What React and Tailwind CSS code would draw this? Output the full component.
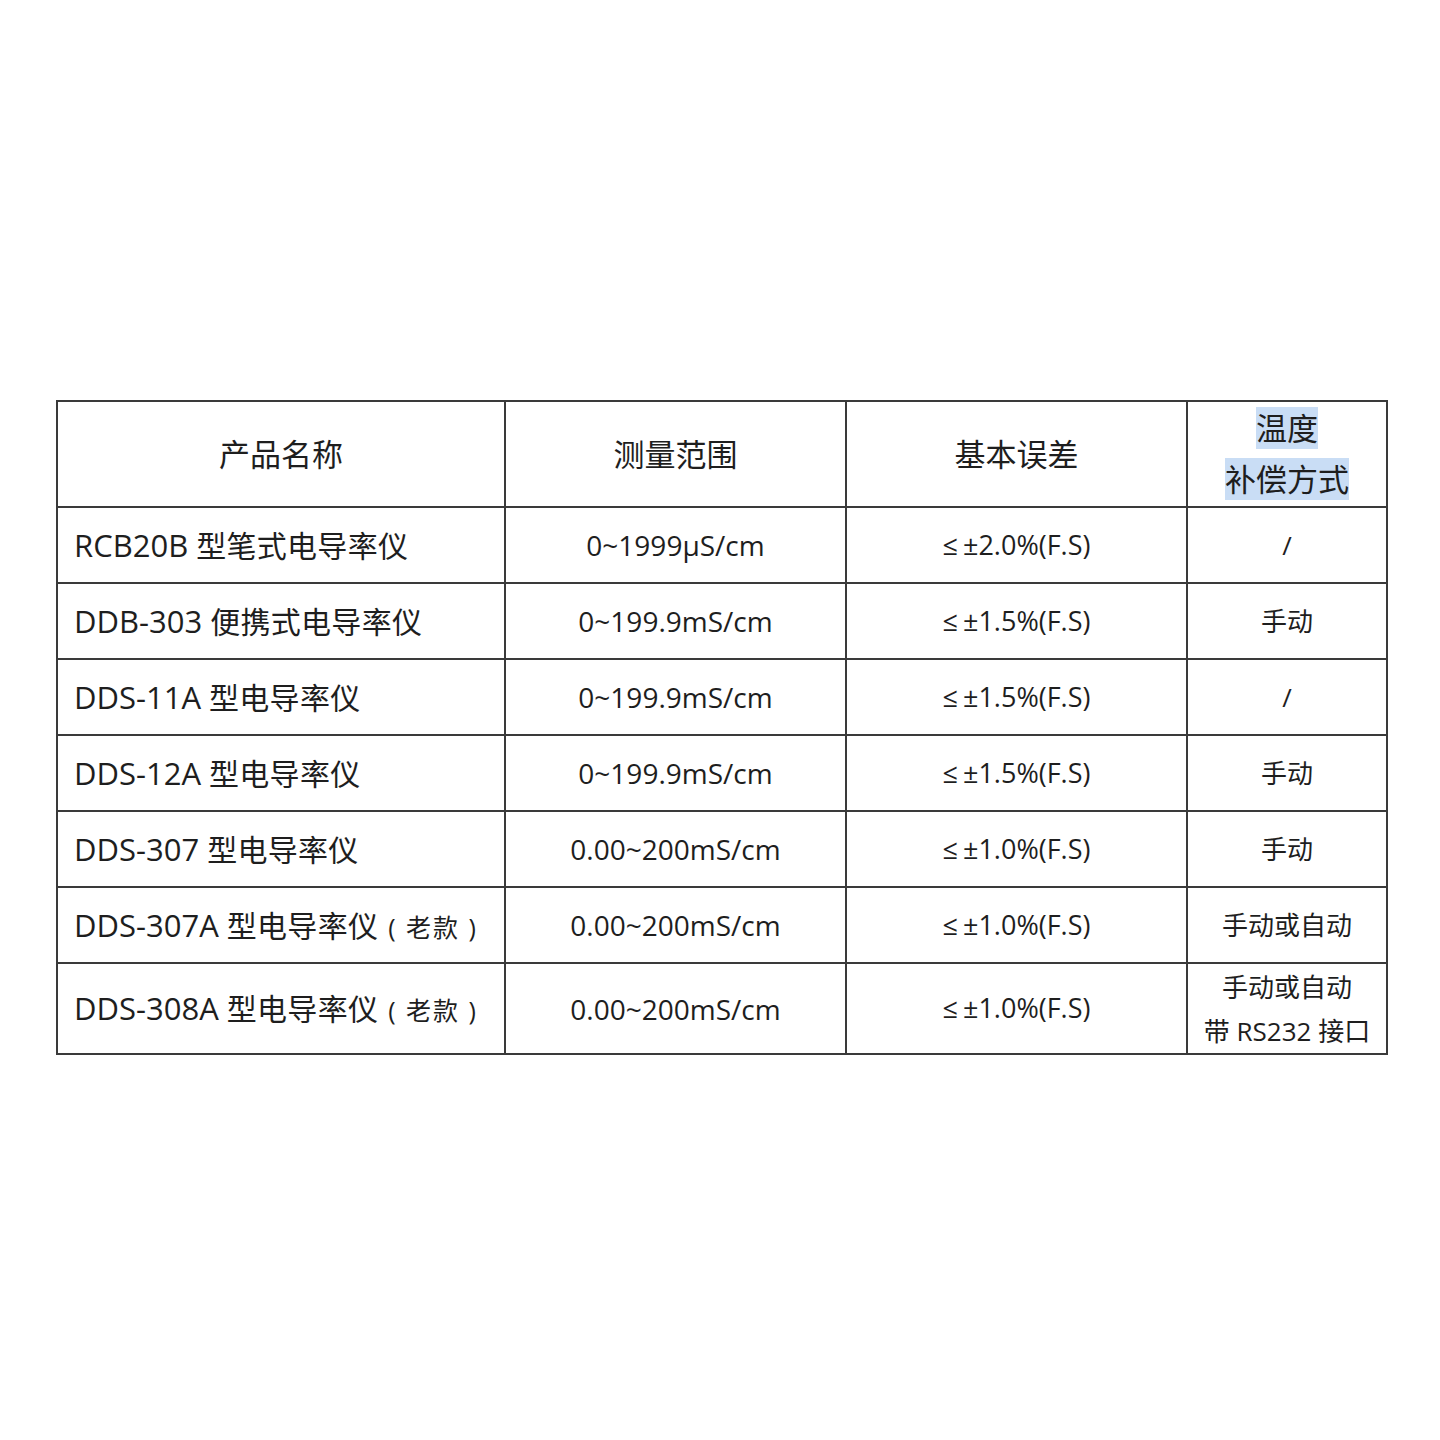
import React from "react";

const rows = [
  { name: "RCB20B", model: "型笔式电导率仪", range: "0~1999μS/cm", err: "≤±2.0%(F.S)", comp: "/" },
  { name: "DDB-303", model: "便携式电导率仪", range: "0~199.9mS/cm", err: "≤±1.5%(F.S)", comp: "手动" },
  { name: "DDS-11A", model: "型电导率仪", range: "0~199.9mS/cm", err: "≤±1.5%(F.S)", comp: "/" },
  { name: "DDS-12A", model: "型电导率仪", range: "0~199.9mS/cm", err: "≤±1.5%(F.S)", comp: "手动" },
  { name: "DDS-307", model: "型电导率仪", range: "0.00~200mS/cm", err: "≤±1.0%(F.S)", comp: "手动" },
  { name: "DDS-307A", model: "型电导率仪", old: true, range: "0.00~200mS/cm", err: "≤±1.0%(F.S)", comp: "手动或自动" },
];

const cell = "border-2 border-[#3a3a3a] text-center align-middle";

function Err({ text }) {
  // "≤" and "±" separated by a small gap as in the reference
  return (
    <span>
      ≤<span className="ml-[5px]">{text.slice(1)}</span>
    </span>
  );
}

function Name({ r }) {
  return (
    <>
      <span className="text-[31px]">{r.name}</span>
      <span className="text-[30px] ml-[8px] tracking-[0.3px]">{r.model}</span>
      {r.old && <span className="text-[25px] ml-[10px] tracking-[2px]">( 老款 )</span>}
    </>
  );
}

export default function App() {
  return (
    <div
      className="w-[1440px] h-[1440px] bg-white pt-[400px] pl-[56px] text-[#1e1e1e] text-[28px]"
      style={{ fontFamily: '"Open Sans", "Noto Sans CJK SC", sans-serif' }}
    >
      <table className="border-collapse table-fixed w-[1330px]">
        <colgroup>
          <col className="w-[448px]" />
          <col className="w-[341px]" />
          <col className="w-[341px]" />
          <col className="w-[200px]" />
        </colgroup>
        <thead>
          <tr className="h-[106px] text-[31px]">
            <th className={`${cell} font-normal`}>产品名称</th>
            <th className={`${cell} font-normal`}>测量范围</th>
            <th className={`${cell} font-normal`}>基本误差</th>
            <th className={`${cell} font-normal leading-[51px]`}>
              <span className="bg-[#c9ddf5]">温度</span>
              <br />
              <span className="bg-[#c9ddf5]">补偿方式</span>
            </th>
          </tr>
        </thead>
        <tbody>
          {rows.map((r) => (
            <tr key={r.name} className="h-[76px]">
              <td className={`${cell} text-left pl-[16px] whitespace-nowrap`}>
                <Name r={r} />
              </td>
              <td className={cell}>{r.range}</td>
              <td className={`${cell} text-[27px]`}>
                <Err text={r.err} />
              </td>
              <td className={`${cell} text-[26px]`}>{r.comp}</td>
            </tr>
          ))}
          <tr className="h-[91px]">
            <td className={`${cell} text-left pl-[16px] whitespace-nowrap`}>
              <Name r={{ name: "DDS-308A", model: "型电导率仪", old: true }} />
            </td>
            <td className={cell}>0.00~200mS/cm</td>
            <td className={`${cell} text-[27px]`}>
              <Err text="≤±1.0%(F.S)" />
            </td>
            <td className={`${cell} leading-[44px] text-[26px]`}>
              手动或自动
              <br />
              带 RS232 接口
            </td>
          </tr>
        </tbody>
      </table>
    </div>
  );
}
